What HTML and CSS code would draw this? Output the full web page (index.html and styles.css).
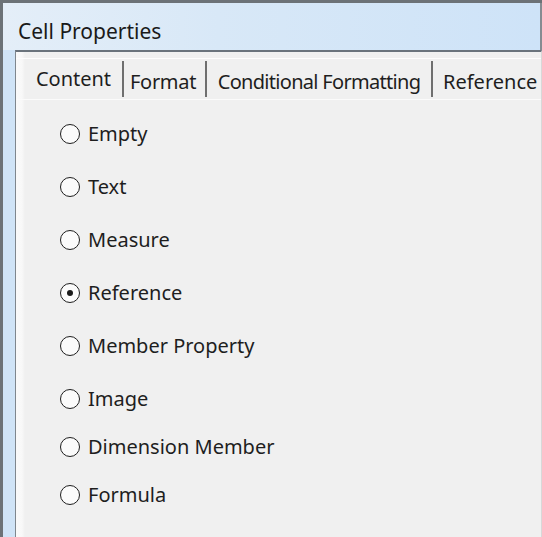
FILE: index.html
```html
<!DOCTYPE html>
<html>
<head>
<meta charset="utf-8">
<link rel="stylesheet" href="styles.css">
</head>
<body>
<div class="window">
  <div class="titlebar"><span class="title">Cell Properties</span></div>
  <div class="client">
    <div class="tabbar">
      <div class="tab tab-content selected">Content</div>
      <div class="sep"></div>
      <div class="tab tab-format">Format</div>
      <div class="sep"></div>
      <div class="tab tab-cond">Conditional Formatting</div>
      <div class="sep"></div>
      <div class="tab tab-ref">Reference</div>
    </div>
    <div class="radio-list">
      <label class="radio"><span class="dot"></span>Empty</label>
      <label class="radio"><span class="dot"></span>Text</label>
      <label class="radio"><span class="dot"></span>Measure</label>
      <label class="radio"><span class="dot checked"></span>Reference</label>
      <label class="radio"><span class="dot"></span>Member Property</label>
      <label class="radio"><span class="dot"></span>Image</label>
      <label class="radio tight"><span class="dot"></span>Dimension Member</label>
      <label class="radio tight"><span class="dot"></span>Formula</label>
    </div>
  </div>
</div>
</body>
</html>
```
FILE: styles.css
```css
html, body {
  margin: 0;
  padding: 0;
}
body {
  width: 542px;
  height: 537px;
  overflow: hidden;
  font-family: "Noto Sans", "Open Sans", sans-serif;
  background: #f0f0f0;
}
.window {
  box-sizing: border-box;
  width: 542px;
  height: 537px;
  border-top: 3px solid #6c7277;
  border-left: 3px solid #6c7277;
  background: #d0e4f7;
  display: flex;
  flex-direction: column;
}
.titlebar {
  flex: none;
  box-sizing: border-box;
  height: 47px;
  padding-left: 15px;
  padding-top: 16px;
  background: linear-gradient(to right, #e4eef8 0%, #d8e8f7 40%, #cee3f8 100%);
  border-right: 2px solid #858c92;
}
.title {
  font-size: 21px;
  line-height: 24px;
  color: #1a1a1a;
}
.client {
  flex: 1;
  margin-left: 12px;
  border-top: 2px solid #6a737c;
  border-left: 1px solid #7f878e;
  border-right: 1px solid #d8d8d8;
  background: linear-gradient(to right, #fafafa 0, #f8f8f8 6px, #f0f0f0 9px);
  display: flex;
  flex-direction: column;
  overflow: hidden;
}
.tabbar {
  flex: none;
  display: flex;
  align-items: center;
  margin-top: 6px;
  height: 40px;
  padding-left: 9px;
  border-top: 1px solid #fdfdfd;
  border-bottom: 1px solid #fbfbfb;
  white-space: nowrap;
}
.tab {
  flex: none;
  font-size: 20px;
  line-height: 24px;
  color: #1e1e1e;
  text-align: center;
  padding-top: 5px;
}
.tab.selected {
  padding-top: 0;
  padding-bottom: 0;
}
.tab-content { width: 97px; }
.tab-format { width: 81px; letter-spacing: -0.3px; text-align: left; padding-left: 6px; box-sizing: border-box; }
.tab-cond { width: 224px; letter-spacing: -0.7px; }
.tab-ref { width: 110px; text-align: left; padding-left: 10px; }
.sep {
  flex: none;
  width: 2px;
  height: 36px;
  background: #6f6f6f;
}
.radio-list {
  display: flex;
  flex-direction: column;
  gap: 29px;
  padding-left: 44px;
  padding-top: 22px;
}
.radio {
  display: flex;
  align-items: center;
  gap: 8px;
  height: 24px;
  font-size: 20px;
  line-height: 24px;
  color: #1e1e1e;
}
.radio.tight {
  margin-top: -5px;
}
.dot {
  box-sizing: border-box;
  width: 20px;
  height: 20px;
  border-radius: 50%;
  border: 1.5px solid #1e1e1e;
  background: #fbfbfb;
  display: flex;
  align-items: center;
  justify-content: center;
}
.dot.checked::after {
  content: "";
  width: 6px;
  height: 6px;
  border-radius: 50%;
  background: #1a1a1a;
}
```
